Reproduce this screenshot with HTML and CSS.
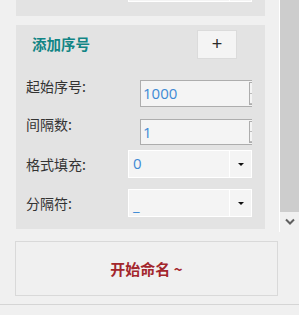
FILE: index.html
```html
<html>
<head>
<meta charset="utf-8">
<title>添加序号</title>
<link rel="stylesheet" href="styles.css">
</head>
<body>
<div class="scroller">
  <div class="content">
    <div class="panel panel-top">
      <div class="select select-top"><span class="value"></span><span class="drop"></span></div>
    </div>

    <div class="panel seq">
      <div class="head">
        <h4 class="title">添加序号</h4>
        <button class="add">+</button>
      </div>

      <div class="row row-1">
        <label class="lbl lbl-up">起始序号:</label>
        <div class="clip">
          <div class="num"><span class="value">1000</span><span class="spin"><i></i><i></i></span></div>
        </div>
      </div>
      <div class="row row-2">
        <label class="lbl lbl-up2">间隔数:</label>
        <div class="clip">
          <div class="num"><span class="value">1</span><span class="spin"><i></i><i></i></span></div>
        </div>
      </div>
      <div class="row row-3">
        <label class="lbl lbl-mid">格式填充:</label>
        <div class="select"><span class="value">0</span><span class="drop"><b class="tri"></b></span></div>
      </div>
      <div class="row row-4">
        <label class="lbl lbl-mid">分隔符:</label>
        <div class="select"><span class="value value-low">_</span><span class="drop"><b class="tri"></b></span></div>
      </div>
    </div>
  </div>

  <div class="scrollbar">
    <div class="track"></div>
    <div class="arrow">
      <svg width="10" height="8" viewBox="0 0 10 8"><path d="M1 1.5 L5 5.5 L9 1.5" fill="none" stroke="#606060" stroke-width="2"/></svg>
    </div>
  </div>
</div>

<div class="start-wrap">
  <button class="start">开始命名 ~</button>
</div>
<div class="footer-line"></div>
</body>
</html>
```

FILE: styles.css
```css
body {
  margin: 0;
  background: #f0f0f0;
  font-family: "Noto Sans CJK SC", "Noto Sans", sans-serif;
  color: #333;
}

.scroller { display: flex; height: 232px; overflow: hidden; }
.content { width: 279px; }

.panel { margin-left: 16px; width: 249px; background: #e3e3e3; box-sizing: border-box; }
.panel-top { display: flow-root; height: 16px; padding-left: 112px; }
.select-top { margin-top: -26px; }

.seq { margin-top: 9px; height: 204px; padding-left: 10px; }

.head { display: flex; height: 55px; }
.title {
  margin: 9px 0 0 6px;
  font-size: 14.5px; line-height: 20px; font-weight: bold;
  color: #128585;
  width: 165px;
}
.add {
  margin-top: 5px;
  width: 40px; height: 29px;
  padding: 0;
  background: #f4f4f4;
  border: 1px solid #dbdbdb;
  font-family: "Liberation Sans", sans-serif;
  font-size: 18px; line-height: 25px;
  color: #2a2a2a;
}

.row { display: flex; align-items: flex-start; }
.row-2 { margin-top: 12px; }
.row-3 { margin-top: 5px; }
.row-4 { margin-top: 11px; }

.lbl {
  width: 102px;
  font-size: 14px; line-height: 20px;
  color: #333;
}
.lbl-up { margin-top: -4px; }
.lbl-up2 { margin-top: -5px; }
.lbl-mid { margin-top: 4px; }

.clip { width: 112px; padding-left: 12px; overflow: hidden; }
.num {
  display: flex;
  width: 124px; height: 27px;
  box-sizing: border-box;
  border: 1px solid #adadad;
  background: #f4f4f4;
}
.row-2 .num { height: 26px; }
.num .value {
  flex: 1;
  padding-left: 2px;
  font-family: "Open Sans", sans-serif;
  font-size: 15px; line-height: 24px;
  color: #3e8ad4;
}
.spin {
  display: flex; flex-direction: column;
  margin: 1px 0;
  width: 14px;
  border: 1px solid #adadad;
  box-sizing: border-box;
}
.spin i { flex: 1; border-bottom: 1px solid #bbb; }

.select {
  display: flex;
  width: 124px; height: 28px;
  box-sizing: border-box;
  border: 1px solid #fff;
  background: #f4f4f4;
}
.select .value {
  flex: 1;
  padding-left: 4px;
  border-right: 1px solid #fff;
  font-family: "Open Sans", sans-serif;
  font-size: 15px; line-height: 25px;
  color: #3e8ad4;
}
.select .value-low { line-height: 30px; }
.drop { width: 21px; display: flex; align-items: center; justify-content: center; }
.tri {
  width: 0; height: 0;
  border-left: 3px solid transparent;
  border-right: 3px solid transparent;
  border-top: 3px solid #111;
}

.scrollbar {
  width: 19px;
  border-left: 1px solid #fff;
  display: flex; flex-direction: column;
}
.track { height: 212px; background: #cdcdcd; }
.arrow { height: 20px; display: flex; align-items: center; justify-content: center; background: #f0f0f0; }

.start-wrap { padding: 9px 0 0 15px; }
.start {
  width: 263px; height: 55px;
  background: #f0f0f0;
  border: 1px solid #d9d9d9;
  font-family: "Noto Sans CJK SC", sans-serif;
  font-size: 15px; font-weight: bold;
  color: #a3262c;
}

.footer-line { margin-top: 8px; height: 1px; background: #d5d5d5; }
```
